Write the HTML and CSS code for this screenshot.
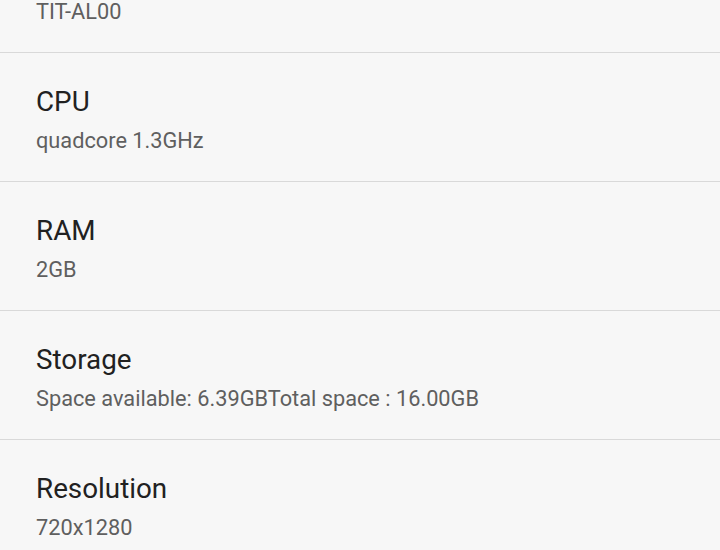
FILE: index.html
```html
<!DOCTYPE html>
<html>
<head>
<meta charset="utf-8">
<link rel="stylesheet" href="styles.css">
</head>
<body>
<div class="list">
  <div class="row"><div class="title">Model</div><div class="sub">TIT-AL00</div></div>
  <div class="row"><div class="title">CPU</div><div class="sub">quadcore 1.3GHz</div></div>
  <div class="row"><div class="title">RAM</div><div class="sub">2GB</div></div>
  <div class="row"><div class="title">Storage</div><div class="sub">Space available: 6.39GBTotal space : 16.00GB</div></div>
  <div class="row"><div class="title">Resolution</div><div class="sub">720x1280</div></div>
</div>
</body>
</html>
```
FILE: styles.css
```css
html, body {
  margin: 0;
  padding: 0;
  background: #f7f7f7;
  overflow: hidden;
  height: 550px;
}
.list {
  margin-top: -76px;
  font-family: Roboto, "Noto Sans", sans-serif;
}
.row {
  padding: 31px 36px 25px;
  border-bottom: 1px solid #d9d9d9;
}
.title {
  font-size: 27.8px;
  line-height: 36px;
  color: #212121;
  margin-bottom: 6px;
}
.sub {
  font-size: 21.75px;
  line-height: 30px;
  color: #5f5f5f;
}
```
